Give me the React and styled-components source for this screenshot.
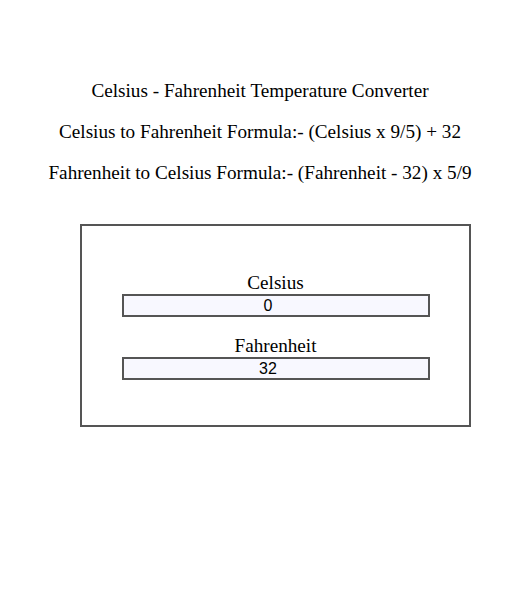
import React, { useState } from "react";
import styled, { createGlobalStyle } from "styled-components";

const GlobalStyle = createGlobalStyle`
  html, body {
    margin: 0;
    padding: 0;
    background: #ffffff;
  }
  body {
    font-family: "Liberation Serif", "Times New Roman", serif;
    color: #000000;
  }
`;

const Page = styled.div`
  width: 520px;
  min-height: 602px;
  padding-top: 80px;
  box-sizing: border-box;
`;

const Header = styled.div`
  display: flex;
  flex-direction: column;
  gap: 19px;
`;

const Line = styled.p`
  margin: 0;
  height: 22px;
  line-height: 22px;
  font-size: 19.2px;
  text-align: center;
`;

const Card = styled.div`
  box-sizing: border-box;
  width: 391px;
  height: 203px;
  margin: 40px 0 0 80px;
  border: 2px solid #555555;
  padding: 46px 0 0;
  display: flex;
  flex-direction: column;
  align-items: center;
`;

const Field = styled.div`
  display: flex;
  flex-direction: column;
  align-items: center;
  margin-top: ${(p) => (p.$first ? "0" : "18px")};
`;

const Label = styled.label`
  display: block;
  height: 22px;
  line-height: 22px;
  font-size: 19.2px;
  text-align: center;
`;

const NumberInput = styled.input`
  box-sizing: border-box;
  width: 308px;
  height: 23px;
  margin: 0;
  padding: 0 2px;
  border: 2px solid #555555;
  background: #f8f8ff;
  font-family: "Liberation Sans", Arial, sans-serif;
  font-size: 16px;
  color: #000000;
  text-align: center;
  outline: none;
`;

export default function App() {
  const [celsius, setCelsius] = useState("0");
  const [fahrenheit, setFahrenheit] = useState("32");

  const onCelsius = (e) => {
    const v = e.target.value;
    setCelsius(v);
    const n = parseFloat(v);
    setFahrenheit(isNaN(n) ? "" : String(Math.round(((n * 9) / 5 + 32) * 100) / 100));
  };

  const onFahrenheit = (e) => {
    const v = e.target.value;
    setFahrenheit(v);
    const n = parseFloat(v);
    setCelsius(isNaN(n) ? "" : String(Math.round((((n - 32) * 5) / 9) * 100) / 100));
  };

  return (
    <>
      <GlobalStyle />
      <Page>
        <Header>
          <Line>Celsius - Fahrenheit Temperature Converter</Line>
          <Line>Celsius to Fahrenheit Formula:- (Celsius x 9/5) + 32</Line>
          <Line>Fahrenheit to Celsius Formula:- (Fahrenheit - 32) x 5/9</Line>
        </Header>
        <Card>
          <Field $first>
            <Label htmlFor="celsius">Celsius</Label>
            <NumberInput id="celsius" type="number" value={celsius} onChange={onCelsius} />
          </Field>
          <Field>
            <Label htmlFor="fahrenheit">Fahrenheit</Label>
            <NumberInput id="fahrenheit" type="number" value={fahrenheit} onChange={onFahrenheit} />
          </Field>
        </Card>
      </Page>
    </>
  );
}
